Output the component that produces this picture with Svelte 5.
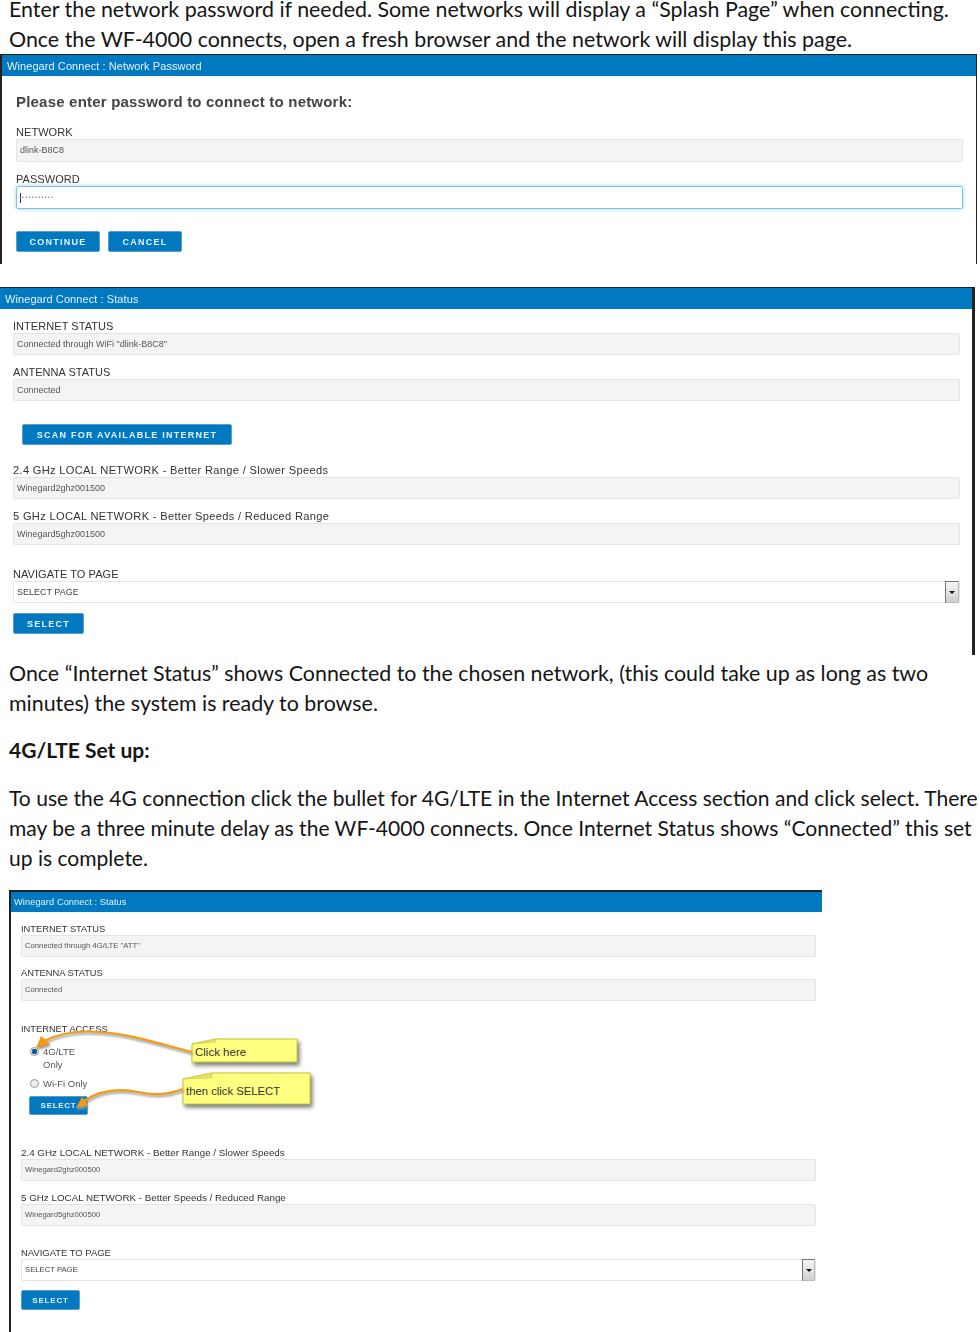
<script lang="ts">
  const status2 = [
    ['INTERNET STATUS', 'Connected through WiFi "dlink-B8C8"'],
    ['ANTENNA STATUS', 'Connected']
  ];
  const local2 = [
    ['2.4 GHz LOCAL NETWORK - Better Range / Slower Speeds', 'Winegard2ghz001500'],
    ['5 GHz LOCAL NETWORK - Better Speeds / Reduced Range', 'Winegard5ghz001500']
  ];
  const status3 = [
    ['INTERNET STATUS', 'Connected through 4G/LTE "ATT"'],
    ['ANTENNA STATUS', 'Connected']
  ];
  const local3 = [
    ['2.4 GHz LOCAL NETWORK - Better Range / Slower Speeds', 'Winegard2ghz000500'],
    ['5 GHz LOCAL NETWORK - Better Speeds / Reduced Range', 'Winegard5ghz000500']
  ];
</script>

{#snippet field(label, value)}
  <div class="group">
    <div class="label" class:long={label.length > 20}>{label}</div>
    <div class="field">{value}</div>
  </div>
{/snippet}

{#snippet nav()}
  <div class="group nav">
    <div class="label">NAVIGATE TO PAGE</div>
    <div class="field select">
      SELECT PAGE
      <span class="drop"><i></i></span>
    </div>
  </div>
{/snippet}

<div class="page">
  <p class="first">
    Enter the network password if needed. Some networks will display a “Splash Page” when connecting.<br />
    Once the WF-4000 connects, open a fresh browser and the network will display this page.
  </p>

  <section class="shot one">
    <header>Winegard Connect : Network Password</header>
    <div class="body">
      <h2>Please enter password to connect to network:</h2>
      {@render field('NETWORK', 'dlink-B8C8')}
      <div class="group">
        <div class="label">PASSWORD</div>
        <div class="field focus"><span class="caret"></span>••••••••••</div>
      </div>
      <div class="actions">
        <button class="wide">CONTINUE</button>
        <button class="cancel">CANCEL</button>
      </div>
    </div>
  </section>

  <section class="shot two">
    <header>Winegard Connect : Status</header>
    <div class="body">
      {#each status2 as [l, v]}
        {@render field(l, v)}
      {/each}
      <button class="scan">SCAN FOR AVAILABLE INTERNET</button>
      {#each local2 as [l, v]}
        {@render field(l, v)}
      {/each}
      {@render nav()}
      <button class="select-btn">SELECT</button>
    </div>
  </section>

  <p class="after-two">
    Once “Internet Status” shows Connected to the chosen network, (this could take up as long as two<br />
    minutes) the system is ready to browse.
  </p>
  <h3>4G/LTE Set up:</h3>
  <p class="setup">
    To use the 4G connection click the bullet for 4G/LTE in the Internet Access section and click select. There<br />
    may be a three minute delay as the WF-4000 connects. Once Internet Status shows “Connected” this set<br />
    up is complete.
  </p>

  <section class="shot three">
    <header>Winegard Connect : Status</header>
    <div class="body">
      {#each status3 as [l, v]}
        {@render field(l, v)}
      {/each}
      <div class="access">
        <div class="label">INTERNET ACCESS</div>
        <div class="radio-row"><span class="radio on"></span><span>4G/LTE<br />Only</span></div>
        <div class="radio-row"><span class="radio"></span><span>Wi-Fi Only</span></div>
        <button class="mini">SELECT</button>
      </div>
      {#each local3 as [l, v]}
        {@render field(l, v)}
      {/each}
      {@render nav()}
      <button class="select-btn">SELECT</button>
    </div>

    <svg class="notes" viewBox="9 890 320 240" width="320" height="240">
      <polygon class="note" points="192,1044 216,1039 297,1039 297,1062 192,1062" />
      <polygon class="fold" points="192,1044 216,1039 216,1042" />
      <text x="195" y="1056">Click here</text>
      <polygon class="note" points="183,1079 212,1073 310,1073 310,1104 183,1104" />
      <polygon class="fold" points="183,1079 212,1073 212,1078" />
      <text class="then" x="186" y="1095">then click SELECT</text>
      <g class="strokes">
        <path class="arrow" d="M192 1052 C160 1044 130 1034 100 1032 C76 1030 58 1034 44 1041" />
        <polygon class="head" points="36,1048 41,1036 50,1044" />
        <path class="arrow" d="M183 1089 C170 1094 155 1096 138 1092 C118 1088 100 1090 84 1101" />
        <polygon class="head" points="76,1108 82,1097 88,1105" />
      </g>
    </svg>
  </section>
</div>

<style>
  :global(body) {
    margin: 0;
    background: #fff;
  }

  .page {
    width: 980px;
    height: 1332px;
    overflow: hidden;
    font-family: Lato, "Liberation Sans", sans-serif;
    font-size: 21.4px;
    line-height: 30px;
    color: #151515;
  }

  p, h3 {
    margin: 0;
    padding-left: 9px;
    white-space: nowrap;
  }

  .first {
    margin-top: -6px;
    width: 960px;
  }

  .after-two {
    margin-top: 3px;
  }

  .setup {
    font-size: 21.05px;
  }

  h3 {
    margin: 17px 0 18px;
    font-size: 21px;
    font-weight: 700;
  }

  .shot {
    font-family: "Liberation Sans", Arial, sans-serif;
    box-sizing: border-box;
    position: relative;
    color: #333;
  }

  /* the reference shots are pasted rasters, slightly soft */
  header, .body {
    filter: blur(0.35px);
  }

  header {
    background: #0079c1;
    color: #e8f2f9;
    display: flex;
    align-items: center;
    letter-spacing: 0.08px;
  }

  .group {
    display: flex;
    flex-direction: column;
  }

  .label {
    font-size: 11px;
    line-height: 14px;
    letter-spacing: 0.05px;
    color: #333;
    white-space: nowrap;
  }

  .label.long {
    letter-spacing: 0.32px;
    font-size: 11.1px;
  }

  .field {
    height: 22px;
    box-sizing: border-box;
    background: #f4f4f4;
    border: 1px solid #e4e4e4;
    border-radius: 2px;
    padding-left: 3px;
    font-size: 9px;
    line-height: 21px;
    color: #555;
    white-space: nowrap;
  }

  .field.focus {
    background: #fff;
    border-color: #7fbfe8;
    box-shadow: 0 0 4px #a9d4f0;
    display: flex;
    align-items: center;
    font-size: 5px;
    letter-spacing: 1.5px;
    color: #777;
  }

  .caret {
    width: 1px;
    height: 10px;
    background: #333;
    margin-right: 1px;
  }

  .field.select {
    background: #fff;
    position: relative;
    color: #444;
  }

  .drop {
    position: absolute;
    top: -1px;
    right: 0;
    bottom: -1px;
    width: 14px;
    box-sizing: border-box;
    border: 1px solid #777;
    border-right-color: #bbb;
    border-bottom-color: #bbb;
    background: linear-gradient(#f6f6f6, #cfcfcf);
    display: flex;
    align-items: center;
    justify-content: center;
  }

  .drop i {
    width: 0;
    height: 0;
    border: 3px solid transparent;
    border-top: 3px solid #111;
    border-bottom: 0;
  }

  button {
    display: block;
    height: 21px;
    padding: 0;
    background: #0079c1;
    border: 1px solid #5b9dc9;
    border-radius: 2px;
    color: #e8f2f9;
    font-family: "Liberation Sans", Arial, sans-serif;
    font-size: 9px;
    font-weight: 700;
    letter-spacing: 1.25px;
    white-space: nowrap;
  }

  .one {
    height: 210px;
    border-top: 1px solid #222;
    border-left: 2px solid #222;
    border-right: 1px solid #222;
    width: 977px;
  }

  .one header {
    height: 21px;
    padding-left: 5px;
    font-size: 11px;
  }

  .one .body {
    padding: 0 13px 0 14px;
  }

  h2 {
    margin: 0;
    font-size: 15px;
    letter-spacing: 0.2px;
    line-height: 18px;
    padding-top: 17px;
    font-weight: 700;
    color: #444;
  }

  .one .group {
    margin-top: 10px;
  }

  .one .group:first-of-type {
    margin-top: 14px;
  }

  .one .field {
    height: 23px;
  }

  .actions {
    display: flex;
    gap: 8px;
    margin-top: 22px;
  }

  .wide { width: 84px; }
  .cancel { width: 74px; }

  .two {
    margin-top: 23px;
    width: 975px;
    height: 368px;
    border-top: 1px solid #222;
    border-right: 3px solid #222;
  }

  .two header {
    height: 21px;
    padding-left: 5px;
    font-size: 11px;
  }

  .two .body {
    padding: 10px 12px 0 13px;
  }

  .two .group + .group {
    margin-top: 10px;
  }

  .scan {
    width: 210px;
    margin: 23px 0 18px 9px;
  }

  .two .group.nav {
    margin-top: 22px;
  }

  .select-btn {
    width: 71px;
    margin-top: 10px;
  }

  .three .select-btn {
    width: 59px;
    margin-top: 9px;
    height: 20px;
    font-size: 8px;
    letter-spacing: 0.8px;
  }

  .three {
    margin: 17px 0 0 9px;
    width: 813px;
    height: 442px;
    border-top: 2px solid #222;
    border-left: 2px solid #222;
  }

  .three header {
    height: 20px;
    padding-left: 3px;
    font-size: 9.25px;
  }

  .three .body {
    padding: 9px 6px 0 10px;
  }

  .three .label {
    font-size: 9.3px;
    line-height: 16px;
    height: 14px;
    letter-spacing: 0;
  }

  .three .label.long {
    font-size: 9.8px;
  }

  .three .nav .label {
    font-size: 9.45px;
  }

  .three .field {
    font-size: 7.7px;
    line-height: 20px;
  }

  .three .drop {
    width: 13px;
  }

  .three .group + .group {
    margin-top: 8px;
  }

  .three .access ~ .group + .group {
    margin-top: 9px;
  }

  .three .access ~ .group.nav {
    margin-top: 19px;
  }

  .access {
    margin: 20px 0 30px;
    font-size: 9.5px;
    line-height: 13px;
  }

  .radio-row {
    display: flex;
    align-items: flex-start;
    gap: 4px;
    margin-left: 9px;
    margin-top: 10px;
    color: #555;
    width: 70px;
  }

  .radio-row + .radio-row {
    margin-top: 6px;
  }

  .radio {
    width: 9px;
    height: 9px;
    margin-top: 2px;
    box-sizing: border-box;
    border: 1px solid #999;
    border-radius: 50%;
    background: #eee;
  }

  .radio.on {
    background: radial-gradient(circle, #0b5a99 0 2.5px, #e6e6e6 3px);
  }

  .mini {
    width: 59px;
    height: 19px;
    margin: 6px 0 0 8px;
    font-size: 8px;
    letter-spacing: 0.7px;
  }

  .notes {
    position: absolute;
    left: -2px;
    top: -2px;
    overflow: visible;
  }

  .note {
    fill: #ffff80;
    stroke: #c8c830;
    stroke-width: 1;
    filter: drop-shadow(2px 3px 2px #777);
  }

  .fold {
    fill: #e2e26a;
    stroke: #c8c830;
    stroke-width: 0.5;
  }

  .notes text {
    font-size: 11.5px;
    fill: #333;
  }

  .notes .then {
    font-size: 11.3px;
  }

  .strokes {
    filter: drop-shadow(1px 2px 1px #999);
  }

  .arrow {
    fill: none;
    stroke: #f59a12;
    stroke-width: 2.2;
  }

  .head {
    fill: #f59a12;
  }
</style>
